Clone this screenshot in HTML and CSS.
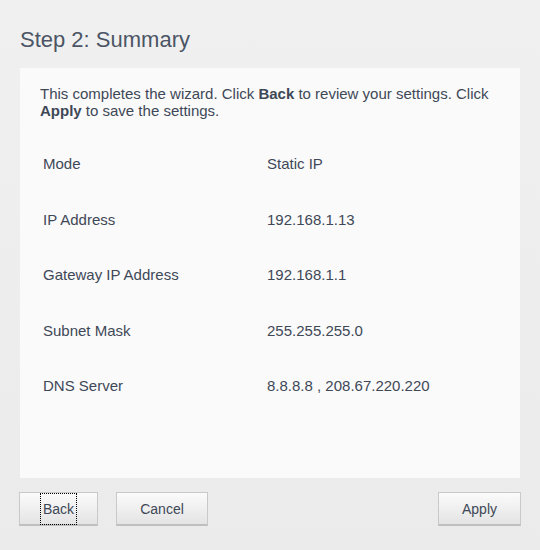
FILE: index.html
```html
<!DOCTYPE html>
<html>
<head>
<meta charset="utf-8">
<link rel="stylesheet" href="styles.css">
</head>
<body>
<div class="page">
  <h1 class="title">Step 2: Summary</h1>
  <div class="panel">
    <p class="intro">This completes the wizard. Click <b>Back</b> to review your settings. Click <b>Apply</b> to save the settings.</p>
    <div class="summary">
      <div class="label">Mode</div><div class="value">Static IP</div>
      <div class="label">IP Address</div><div class="value">192.168.1.13</div>
      <div class="label">Gateway IP Address</div><div class="value">192.168.1.1</div>
      <div class="label">Subnet Mask</div><div class="value">255.255.255.0</div>
      <div class="label">DNS Server</div><div class="value">8.8.8.8 , 208.67.220.220</div>
    </div>
  </div>
  <div class="actions">
    <button class="btn btn-back"><span class="focus">Back</span></button>
    <button class="btn btn-cancel">Cancel</button>
    <button class="btn btn-apply">Apply</button>
  </div>
</div>
</body>
</html>
```

FILE: styles.css
```css
html, body {
  margin: 0;
  padding: 0;
}
body {
  width: 540px;
  height: 550px;
  background: linear-gradient(#f0f0f0, #ebebeb);
  font-family: "Liberation Sans", Arial, sans-serif;
  color: #3e4857;
}
.page {
  padding: 27px 19px 0 20px;
}
.title {
  margin: 0;
  font-size: 22px;
  line-height: 25px;
  font-weight: normal;
  color: #4b5565;
}
.panel {
  margin-top: 16px;
  width: 500px;
  height: 410px;
  box-sizing: border-box;
  background: #fafafa;
  padding: 18px 20px 0 20px;
}
.intro {
  margin: 0;
  font-size: 15px;
  line-height: 16.5px;
}
.intro b {
  font-weight: bold;
}
.summary {
  margin-top: 17px;
  display: grid;
  grid-template-columns: 224px 1fr;
  font-size: 15px;
  line-height: 17.5px;
}
.label, .value {
  padding: 19px 3px;
}
.actions {
  display: flex;
  align-items: flex-start;
  margin-top: 14px;
  margin-left: -1px;
}
.btn {
  height: 34px;
  box-sizing: border-box;
  border: 1px solid #c9c9c9;
  border-bottom: 2px solid #bfbfbf;
  background: linear-gradient(#fbfbfb, #e4e4e4);
  font-family: "Liberation Sans", Arial, sans-serif;
  font-size: 14px;
  color: #3e4857;
  padding: 0;
  display: flex;
  align-items: center;
  justify-content: center;
}
.btn-back {
  width: 79px;
}
.btn-cancel {
  width: 92px;
  margin-left: 18px;
}
.btn-apply {
  width: 83px;
  margin-left: auto;
}
.focus {
  border: 1px dotted #000;
  padding: 7px 2px 6px 2px;
  line-height: 17px;
}
```
